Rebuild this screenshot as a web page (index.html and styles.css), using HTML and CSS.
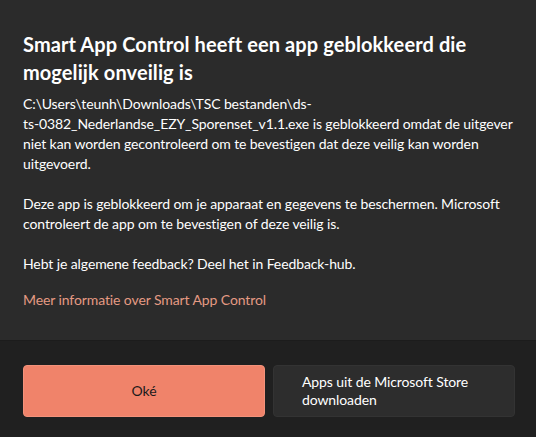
FILE: index.html
```html
<!DOCTYPE html>
<html lang="nl">
<head>
<meta charset="utf-8">
<link rel="stylesheet" href="styles.css">
</head>
<body>
<div class="dialog">
  <div class="content">
    <h1 class="title">Smart App Control heeft een app geblokkeerd die mogelijk onveilig is</h1>
    <p class="text">C:\Users\teunh\Downloads\TSC bestanden\ds-<br>ts-0382_Nederlandse_EZY_Sporenset_v1.1.exe is geblokkeerd omdat de uitgever niet kan worden gecontroleerd om te bevestigen dat deze veilig kan worden uitgevoerd.</p>
    <p class="text">Deze app is geblokkeerd om je apparaat en gegevens te beschermen. Microsoft controleert de app om te bevestigen of deze veilig is.</p>
    <p class="text">Hebt je algemene feedback? Deel het in Feedback-hub.</p>
    <a class="link" href="#">Meer informatie over Smart App Control</a>
  </div>
  <div class="footer">
    <button class="btn primary">Oké</button>
    <button class="btn secondary">Apps uit de Microsoft Store downloaden</button>
  </div>
</div>
</body>
</html>
```
FILE: styles.css
```css
* { box-sizing: border-box; }
html, body {
  margin: 0;
  padding: 0;
  background: #2b2b2b;
  width: 536px;
  height: 437px;
  overflow: hidden;
}
body {
  font-family: "Lato", "Open Sans", sans-serif;
  color: #ffffff;
}
.dialog {
  display: flex;
  flex-direction: column;
  height: 437px;
}
.content {
  flex: 1;
  padding: 30px 8px 0 23px;
  background: #2b2b2b;
}
.title {
  margin: 0 0 8px 0;
  font-size: 20px;
  line-height: 28px;
  font-weight: 700;
  letter-spacing: 0.1px;
}
.text {
  margin: 0 0 20px 0;
  font-size: 14px;
  line-height: 20px;
  font-weight: 400;
  letter-spacing: -0.1px;
  color: #ffffff;
}
.link {
  display: block;
  margin-top: -4px;
  font-size: 14px;
  line-height: 20px;
  letter-spacing: -0.1px;
  color: #e59a83;
  text-decoration: none;
}
.footer {
  height: 97px;
  background: #202020;
  border-top: 1px solid #1c1c1c;
  display: flex;
  gap: 8px;
  padding: 24px 21px 0 23px;
}
.btn {
  width: 242px;
  height: 52px;
  border-radius: 4px;
  font-family: inherit;
  font-size: 14px;
  line-height: 18px;
  letter-spacing: -0.1px;
}
.primary {
  background: #f0836a;
  border: 1px solid #f3927b;
  color: #1b1b1b;
}
.secondary {
  background: #2d2d2d;
  border: 1px solid #333333;
  color: #ffffff;
  text-align: left;
  padding: 0 30px 0 28px;
}
```
